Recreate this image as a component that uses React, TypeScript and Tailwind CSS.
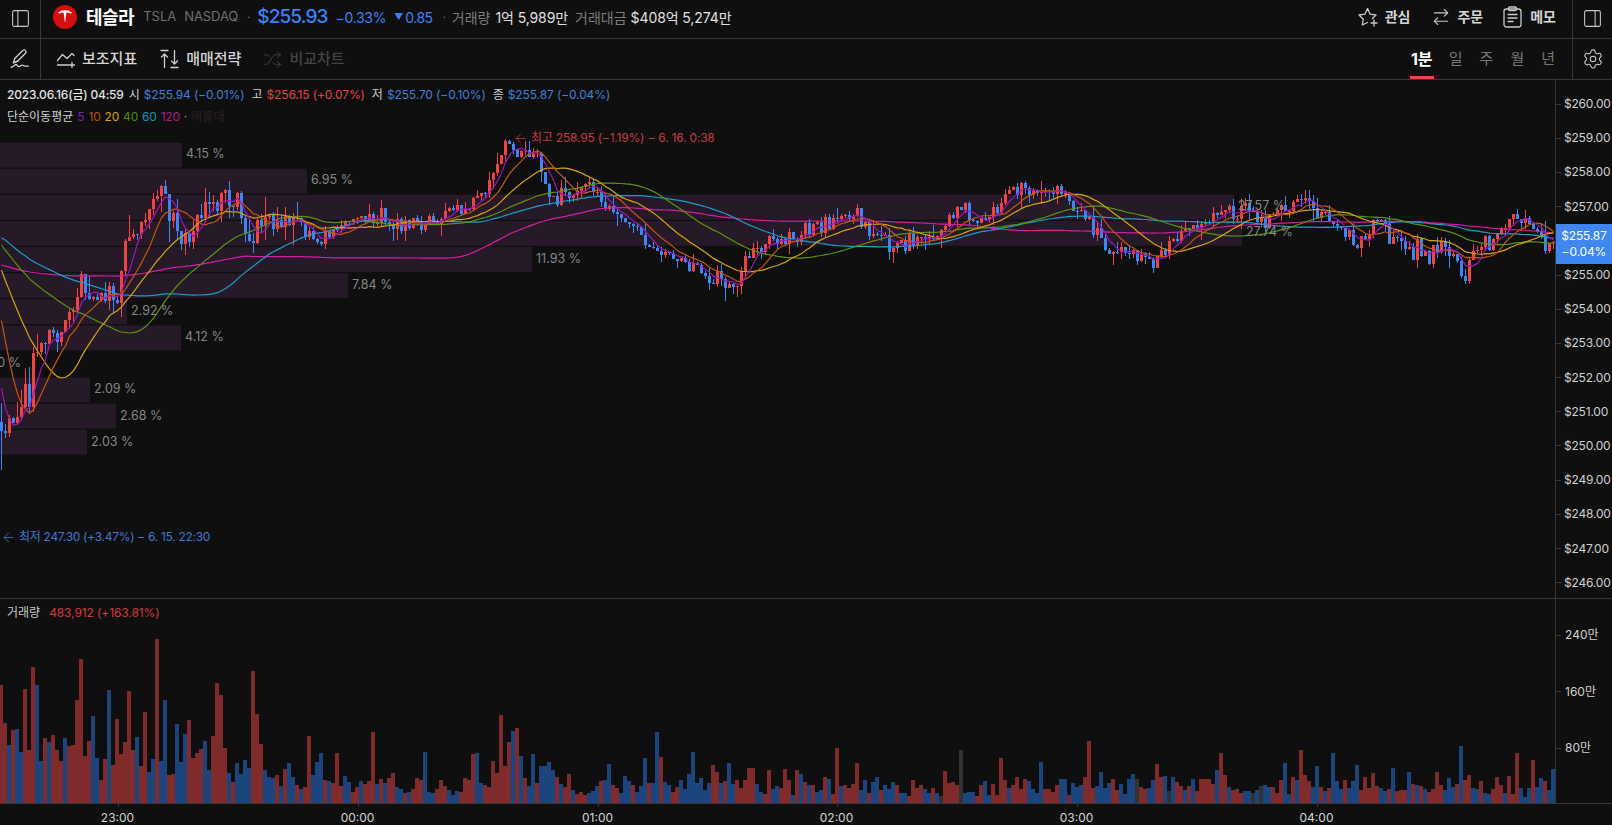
import React from 'react';
import { ArrowLeft, ArrowRightLeft, PanelLeft, PanelRight, Settings, Shuffle } from 'lucide-react';

// hand-read price path in chart pixels: [x, y]
const path: [number, number][] = [
  [-480, 292], [-233, 292], [-232, 220], [-30, 220], [0, 440], [5, 417], [10, 420], [15, 413], [20, 415], [25, 408], [31, 393], [33, 345],
  [40, 340], [45, 335], [50, 330], [60, 335], [65, 320], [72, 318], [77, 300], [80, 280], [93, 293], [108, 297], [120, 277], [127, 243],
  [135, 223], [145, 203], [160, 193], [167, 207], [177, 223], [185, 247], [190, 250], [202, 207], [210, 217], [225, 197], [237, 200],
  [250, 233], [262, 223], [290, 226], [320, 240], [340, 220], [380, 218], [400, 227], [420, 223], [440, 217], [470, 210], [480, 193],
  [490, 180], [505, 150], [515, 148], [530, 153], [540, 163], [547, 190], [555, 200], [570, 197], [590, 188], [600, 193], [613, 218],
  [630, 227], [647, 243], [657, 257], [677, 258], [693, 267], [702, 275], [713, 285], [733, 283], [750, 253], [773, 240], [797, 237],
  [800, 232], [833, 222], [857, 210], [863, 223], [877, 240], [893, 248], [907, 245], [920, 235], [933, 237], [943, 227], [950, 215],
  [963, 210], [983, 222], [1003, 198], [1027, 187], [1040, 198], [1060, 192], [1067, 202], [1083, 215], [1100, 227], [1108, 248],
  [1133, 253], [1153, 263], [1160, 253], [1180, 240], [1200, 230], [1217, 210], [1243, 213], [1267, 223], [1280, 210], [1310, 197],
  [1317, 217], [1337, 227], [1357, 242], [1377, 223], [1400, 237], [1410, 253], [1427, 253], [1443, 243], [1453, 260], [1463, 273],
  [1477, 250], [1493, 243], [1517, 220], [1530, 227], [1552, 240],
];

const priceAt = (x: number) => {
  for (let k = 1; k < path.length; k++) {
    if (x <= path[k][0]) {
      const [x0, y0] = path[k - 1];
      const [x1, y1] = path[k];
      return y0 + ((x - x0) / (x1 - x0)) * (y1 - y0);
    }
  }
  return path[path.length - 1][1];
};

let seed = 41;
const rnd = () => {
  seed = (seed * 16807) % 2147483647;
  return seed / 2147483647;
};

const COUNT = 389;
const PRE = 120;
const closes: number[] = [];
for (let i = -PRE; i < COUNT; i++) closes.push(priceAt(4 * i + 1.5));

type Candle = { x: number; open: number; close: number; high: number; low: number };
const candles: Candle[] = [];
let last = closes[PRE - 1];
for (let i = 0; i < COUNT; i++) {
  const amp = i < 75 ? 11 : 6.5;
  const wick = i < 75 ? 24 : 14;
  const spike = 1 + 1.5 * rnd() ** 4;
  const close = closes[PRE + i] + (rnd() - 0.5) * 2 * amp * spike;
  const open = last;
  const high = Math.min(open, close) - rnd() * rnd() * wick;
  const low = Math.max(open, close) + rnd() * rnd() * wick;
  candles.push({ x: 4 * i, open, close, high, low });
  last = close;
}
candles[0].low = 470;
candles[126].high = 139;

const allCloses = [...closes.slice(0, PRE), ...candles.map((c) => c.close)];
const maLine = (n: number) => {
  const pts: string[] = [];
  for (let i = 0; i < COUNT; i++) {
    const end = PRE + i;
    let sum = 0;
    for (let j = end - n + 1; j <= end; j++) sum += allCloses[j];
    pts.push(`${4 * i + 1.5},${(sum / n).toFixed(1)}`);
  }
  return pts.join(' ');
};

const maSet = [
  { n: 120, color: '#d11fa3' },
  { n: 60, color: '#1c9dc9' },
  { n: 40, color: '#5c9410' },
  { n: 20, color: '#d6a50f' },
  { n: 10, color: '#c4560f' },
  { n: 5, color: '#9a18b8' },
];

const profile = [
  { w: 182, label: '4.15 %' },
  { w: 307, label: '6.95 %' },
  { w: 1234, label: '27.57 %' },
  { w: 1242, label: '27.74 %' },
  { w: 532, label: '11.93 %' },
  { w: 348, label: '7.84 %' },
  { w: 127, label: '2.92 %' },
  { w: 181, label: '4.12 %' },
  { w: -23, label: '1.20 %' },
  { w: 90, label: '2.09 %' },
  { w: 116, label: '2.68 %' },
  { w: 87, label: '2.03 %' },
];

// bar tops read from the picture; negative = blue, over 1000 = grey
const volA = [
  285, 400, -465, 420, -418, -487, 298, 481, 232, -287, -515, 445, -458, 436, 481, 515, -445, 470, 466, 331, 208, 500, 455, -380, -505, 572,
  508, -301, 527, 388, 493, 458, 304, 481, -442, 530, 367, -547, -508, 148, -515, -331, 557, 553, -403, -517, -433, 391, 505, 490, 478, -455,
  -541, 439, 280, 316, 475, -550, 577, -520, -553, -511, -535, 244, 373, 463, -541, -562, -565, 556, -590, 538, -520, -562, 586, -598, 592,
  439, -556, -517, -490, 571, -574, 580, 490, 589, -559, -577, 607, 592, -574, 583, 574, 427, -584, 568, -581, 565, 550, -592, -598, 611,
  -607, 598, 565, 571, -487, -607, -610, 598, 571, 589, -601, -616, -604, 607, 565, 571, 493, -490, -580, 586, 592, 514, 550, 376, 529, 457,
  -424, 415, -499, 565, -589, -493, 580,
];
const volB = [
  -320, -318, -307, -331, 352, -373, 382, 343, -391, 404, 397, 406, -400, -394, -379, 364, -361, -313, 376, 385, -400, -349, -364, 376, -397,
  -379, -295, 370, -370, -217, 292, -367, -376, 397, 382, -361, -388, -343, -277, -370, -355, -391, -370, 316, 337, -370, 364, -310, -373,
  361, 385, 361, 325, 325, -373, -397, 403, 331, -388, -379, 385, 328, 361, -406, 331, -343, 367, -376, 376, -397, -391, 352, -358, 403, 265,
  -379, 376, 385, 373, 310, -391, -361, 400, -367, -352, 391, -376, -388, -367, 376, -400, -400, 409, 361, 385, 376, -388, -400, 385, -400,
  1409, 334, 370, 367, 376, 1271, -400, -397, -397, 409, 376, -364, -406, 373, 406, 295, 361, -385, 376, 352, 388, 358, -364, -388, -400, -307,
  388, 388, 397, 376, -358, -358, 406, -370, -382,
];
const volC = [
  -376, 352, 244, 385, -379, -337, -385, -370, 358, 391, -373, -404, -358, -343, 1358, 382, 388, -385, -361, 313, 352, -349, 1394, -352, 367,
  379, -391, 379, -358, 394, 358, 358, 358, 373, -331, 280, 346, -382, 391, 388, 400, -394, -394, 1400, -391, 1379, -376, -382, 382, 400, 361,
  -310, -403, 352, -361, 271, 346, 364, -382, -319, 382, -394, 385, -280, -364, -388, 361, -385, -364, -316, 391, 352, 385, 340, 379, -385,
  -394, 388, -325, 394, 391, 391, -337, 373, -376, 379, -388, 397, 388, 337, 376, -391, -355, -382, 373, -259, 361, 346, -385, -388, 364, -400,
  -403, 388, 352, 376, -400, 349, 403, 280, -385, -412, -385, 301, -382, -355, 364, -391, -328,
];

type Bar = { h: number; fill: string };
const toBar = (t: number, base: number): Bar => {
  if (t > 1000) return { h: (base - (t - 1000)) / 3, fill: '#323232' };
  return t < 0 ? { h: (base + t) / 3, fill: '#1b457c' } : { h: (base - t) / 3, fill: '#7f2a2b' };
};
const bars = [...volA.map((t) => toBar(t, 640)), ...volB.map((t) => toBar(t, 430)), ...volC.map((t) => toBar(t, 430))];

const prices = ['$260.00', '$259.00', '$258.00', '$257.00', '', '$255.00', '$254.00', '$253.00', '$252.00', '$251.00', '$250.00', '$249.00', '$248.00', '$247.00', '$246.00'];
const hours = [
  { x: 117.5, label: '23:00' },
  { x: 357.5, label: '00:00' },
  { x: 597.5, label: '01:00' },
  { x: 836.5, label: '02:00' },
  { x: 1076.5, label: '03:00' },
  { x: 1316.5, label: '04:00' },
];

const TeslaLogo = () => (
  <svg width="24" height="24" viewBox="0 0 24 24">
    <circle cx="12" cy="12" r="12" fill="#d40f0f" />
    <path d="M5 7.200c4.400-1.700 9.600-1.700 14 0-.5.9-1 1.400-1.600 1.600-.2-.7-.9-1-2.100-1.100l-1.900 0-1.400 10.300-1.400-10.300-1.900 0c-1.200.1-1.900.4-2.100 1.100-.6-.2-1.100-.7-1.600-1.600z" fill="#fff" />
    <path d="M7 5.900c3.200-.9 6.800-.9 10 0l-.4.500c-2.900-.7-6.300-.7-9.200 0z" fill="#fff" />
  </svg>
);

const PenIcon = () => (
  <svg width="22" height="22" viewBox="0 0 20 20" fill="none" stroke="#cfcfcf" strokeWidth="1.200" strokeLinecap="round" strokeLinejoin="round">
    <path d="M4 13.500 5.200 9.500 12.500 2.200a1.500 1.500 0 0 1 2.200 0l.3.300a1.500 1.500 0 0 1 0 2.200L7.800 12z" />
    <path d="M4 13.500 7.800 12" />
    <path d="M2 17.500c2-.4 3-2.500 4.500-2.500s.8 2 2.300 2 2.200-1.500 3.200-1.500 1.200 1 2.500 1h3" />
  </svg>
);

const IndicatorIcon = () => (
  <svg width="20" height="18" viewBox="0 0 20 18" fill="none" stroke="#cfcfcf" strokeWidth="1.300" strokeLinecap="round" strokeLinejoin="round">
    <path d="M1.500 10.500 6.500 4.500 11 8.500 16 3.500l2 2" />
    <path d="M1.500 15h11" />
    <path d="M16 12.500v5M13.500 15h5" />
  </svg>
);

const StrategyIcon = () => (
  <svg width="19" height="20" viewBox="0 0 19 20" fill="none" stroke="#cfcfcf" strokeWidth="1.300" strokeLinecap="round" strokeLinejoin="round">
    <path d="M1 1.500h7" />
    <path d="M4.500 18.500V5M1.500 8l3-3 3 3" />
    <path d="M11 18.500h7" />
    <path d="M14.500 1.500V15M11.500 12l3 3 3-3" />
  </svg>
);

const StarPlusIcon = () => (
  <svg width="21" height="21" viewBox="0 0 21 21" fill="none" stroke="#c9c9c9" strokeWidth="1.300" strokeLinecap="round" strokeLinejoin="round">
    <path d="M9.500 16.500 4.300 19l1-5.800L1 9l5.800-.8L9.500 2.500l2.700 5.700L18 9l-3.500 3.500" />
    <path d="M16 14v6M13 17h6" />
  </svg>
);

const MemoIcon = () => (
  <svg width="19" height="22" viewBox="0 0 19 22" fill="none" stroke="#c9c9c9" strokeWidth="1.300" strokeLinecap="round" strokeLinejoin="round">
    <rect x="1" y="3" width="17" height="18" rx="2.500" />
    <rect x="5.500" y="1" width="8" height="3.500" rx="1.200" />
    <path d="M5 8.500h9M5 12h9M5 15.500h5" />
  </svg>
);

const Info = ({ k, v, red }: { k: string; v: string; red?: boolean }) => (
  <span className="flex items-center">
    <span className="text-[#d0d0d0] mr-[4px]">{k}</span>
    <span className={`tracking-[-0.12px] ${red ? 'text-[#e04343]' : 'text-[#3f7fd9]'}`}>{v}</span>
  </span>
);

const App: React.FC = () => {
  return (
    <div className="w-[1612px] h-[825px] overflow-hidden flex flex-col bg-[#0f0f0f] text-[#d0d0d0] font-[Inter,'Noto_Sans_CJK_KR',sans-serif]">
      <div className="h-[39px] flex shrink-0 border-b border-[#383838]">
        <div className="w-[41px] border-r border-[#383838] flex items-center justify-center pb-[2px]">
          <PanelLeft size={21} strokeWidth={1.2} color="#c9c9c9" />
        </div>
        <div className="flex-1 flex items-center pl-[12px] pb-[4px]">
          <TeslaLogo />
          <span className="ml-[9px] text-[18px] font-semibold text-white tracking-[-0.5px]">테슬라</span>
          <span className="ml-[9px] text-[13px] text-[#6f6f6f]">TSLA</span>
          <span className="ml-[8px] text-[13px] text-[#6f6f6f] tracking-[-0.1px]">NASDAQ</span>
          <span className="ml-[9px] text-[11px] text-[#6f6f6f]">·</span>
          <span className="ml-[7px] text-[19px] font-medium text-[#3b82f6] tracking-[-0.9px]">$255.93</span>
          <span className="ml-[8px] text-[14px] text-[#3b82f6] tracking-[-0.3px]">−0.33%</span>
          <span className="ml-[8px] text-[9px] text-[#3b82f6]">▼</span>
          <span className="ml-[2px] text-[14px] text-[#3b82f6] tracking-[-0.5px]">0.85</span>
          <span className="ml-[10px] text-[11px] text-[#6f6f6f]">·</span>
          <span className="ml-[6px] text-[14px] text-[#7c7c7c]">거래량</span>
          <span className="ml-[5px] text-[14px] text-[#e0e0e0] tracking-[-0.1px]">1억 5,989만</span>
          <span className="ml-[7px] text-[14px] text-[#7c7c7c]">거래대금</span>
          <span className="ml-[4px] text-[14px] text-[#e0e0e0] tracking-[-0.1px]">$408억 5,274만</span>
        </div>
        <div className="flex items-center pb-[5px] text-[14px] font-semibold text-[#d5d5d5]">
          <StarPlusIcon />
          <span className="ml-[6px]">관심</span>
          <span className="ml-[21px]"><ArrowRightLeft size={20} strokeWidth={1.3} color="#c9c9c9" /></span>
          <span className="ml-[6px]">주문</span>
          <span className="ml-[20px]"><MemoIcon /></span>
          <span className="ml-[8px] mr-[16px]">메모</span>
        </div>
        <div className="w-[40px] border-l border-[#383838] flex items-center justify-center pb-[2px]">
          <PanelRight size={21} strokeWidth={1.2} color="#c9c9c9" />
        </div>
      </div>

      <div className="h-[41px] flex shrink-0 border-b border-[#383838]">
        <div className="w-[41px] border-r border-[#383838] flex items-center justify-center">
          <PenIcon />
        </div>
        <div className="flex-1 flex items-center pl-[15px] text-[15px] font-medium">
          <IndicatorIcon />
          <span className="ml-[6px] text-[#d5d5d5]">보조지표</span>
          <span className="ml-[23px]"><StrategyIcon /></span>
          <span className="ml-[7px] text-[#d5d5d5]">매매전략</span>
          <span className="ml-[22px]"><Shuffle size={19} strokeWidth={1.2} color="#444" /></span>
          <span className="ml-[7px] text-[#444]">비교차트</span>
        </div>
        <div className="flex items-stretch text-[15px] text-[#777]">
          <span className="w-[24px] flex items-center justify-center text-[16px] font-bold text-white border-b-[3px] border-[#ef4444] pt-[2px]">1분</span>
          <span className="ml-[15px] flex items-center">일</span>
          <span className="ml-[17px] flex items-center">주</span>
          <span className="ml-[17px] flex items-center">월</span>
          <span className="ml-[17px] mr-[17px] flex items-center">년</span>
        </div>
        <div className="w-[40px] border-l border-[#383838] flex items-center justify-center">
          <Settings size={22} strokeWidth={1.2} color="#c9c9c9" />
        </div>
      </div>

      <div className="h-[519px] flex shrink-0 border-b border-[#383838]">
        <div className="relative w-[1555px] overflow-hidden">
          <svg className="absolute inset-0" width="1555" height="518" viewBox="0 80 1555 518">
            {profile.map((p, i) => p.w > 0 && (
              <rect key={i} x="0" y={142.7 + 26.1 * i} width={p.w} height="24.8" fill="#261a28" />
            ))}
            {candles.map((c) => {
              const up = c.close < c.open;
              const fill = up ? '#f04343' : '#3f86f0';
              const top = Math.min(c.open, c.close);
              const h = Math.max(1, Math.abs(c.close - c.open));
              return (
                <g key={c.x} fill={fill} shapeRendering="crispEdges">
                  <rect x={c.x + 1} y={c.high} width="1" height={c.low - c.high} />
                  <rect x={c.x} y={top} width="3" height={h} />
                </g>
              );
            })}
            {maSet.map((m) => (
              <polyline key={m.n} points={maLine(m.n)} fill="none" stroke={m.color} strokeWidth="1.2" />
            ))}
          </svg>

          {profile.map((p, i) => (
            <span
              key={i}
              className="absolute text-[12.5px] leading-[16px] text-[#858585] whitespace-nowrap"
              style={{ left: p.w + 4, top: 146 + 26.15 * i - 80 }}
            >
              {p.label}
            </span>
          ))}

          <div className="relative px-[7px] pt-[7px] text-[12px] leading-[16px]">
            <div className="flex items-center gap-[7px]">
              <span className="text-[#e2e2e2] font-medium tracking-[-0.2px] -mr-[2px]">2023.06.16(금) 04:59</span>
              <Info k="시" v="$255.94 (−0.01%)" />
              <Info k="고" v="$256.15 (+0.07%)" red />
              <Info k="저" v="$255.70 (−0.10%)" />
              <Info k="종" v="$255.87 (−0.04%)" />
            </div>
            <div className="flex items-center mt-[6px]">
              <span className="text-[#d0d0d0]">단순이동평균</span>
              <span className="ml-[4px] text-[#7c1fb0]">5</span>
              <span className="ml-[4px] text-[#b4530f] tracking-[-0.2px]">10</span>
              <span className="ml-[4px] text-[#d6a50f] tracking-[-0.2px]">20</span>
              <span className="ml-[4px] text-[#4f8a0e] tracking-[-0.2px]">40</span>
              <span className="ml-[4px] text-[#1a93bd] tracking-[-0.2px]">60</span>
              <span className="ml-[4px] text-[#b01a8c] tracking-[-0.2px]">120</span>
              <span className="ml-[4px] text-[#9a9a9a]">·</span>
              <span className="ml-[4px] text-[#2b2028]">매물대</span>
            </div>
          </div>

          <div className="absolute left-[513px] top-[50px] flex items-center gap-[3px] text-[12px] leading-[16px] text-[#c43b3b] whitespace-nowrap tracking-[-0.2px]">
            <ArrowLeft size={15} strokeWidth={1.3} />
            <span>최고 258.95 (−1.19%) − 6. 16. 0:38</span>
          </div>
          <div className="absolute left-[1px] top-[449px] flex items-center gap-[3px] text-[12px] leading-[16px] text-[#3b78cf] whitespace-nowrap tracking-[-0.3px]">
            <ArrowLeft size={15} strokeWidth={1.3} />
            <span>최저 247.30 (+3.47%) − 6. 15. 22:30</span>
          </div>
        </div>

        <div className="relative flex-1 border-l border-[#383838] pt-[7px] text-[12px] text-[#cfcfcf] tracking-[-0.2px]">
          {prices.map((p, i) => (
            <div key={i} className="h-[34.2px] flex items-center">
              <span className="w-[5px] h-px bg-[#383838]" />
              <span className="ml-[3px]">{p}</span>
            </div>
          ))}
          <div className="absolute left-0 right-0 top-[144px] h-[40px] bg-[#3f86f0] text-white flex flex-col items-center justify-center leading-[16px]">
            <span>$255.87</span>
            <span>−0.04%</span>
          </div>
        </div>
      </div>

      <div className="h-[205px] flex shrink-0 border-b border-[#383838]">
        <div className="relative w-[1555px] overflow-hidden">
          <svg className="absolute inset-0" width="1555" height="204" viewBox="0 599 1555 204">
            {bars.map((b, i) => (
              <rect key={i} x={4 * i - 1} y={803 - b.h} width="4" height={b.h} fill={b.fill} shapeRendering="crispEdges" />
            ))}
          </svg>
          <div className="relative flex px-[7px] pt-[6px] text-[12px] leading-[16px]">
            <span className="text-[#c9c9c9]">거래량</span>
            <span className="ml-[9px] text-[#d33a3a] tracking-[-0.1px]">483,912 (+163.81%)</span>
          </div>
        </div>
        <div className="flex-1 border-l border-[#383838] pt-[8px] text-[12px] text-[#cfcfcf]">
          {['240만', '160만', '80만'].map((v) => (
            <div key={v} className="h-[56.5px] flex items-center">
              <span className="w-[5px] h-px bg-[#383838]" />
              <span className="ml-[4px]">{v}</span>
            </div>
          ))}
        </div>
      </div>

      <div className="relative flex-1 text-[12px] text-[#d5d5d5]">
        {hours.map((h) => (
          <React.Fragment key={h.label}>
            <span className="absolute top-0 w-px h-[3px] bg-[#383838]" style={{ left: h.x }} />
            <span className="absolute top-[6px] leading-[16px] -translate-x-1/2" style={{ left: h.x }}>{h.label}</span>
          </React.Fragment>
        ))}
      </div>
    </div>
  );
};

export default App;
